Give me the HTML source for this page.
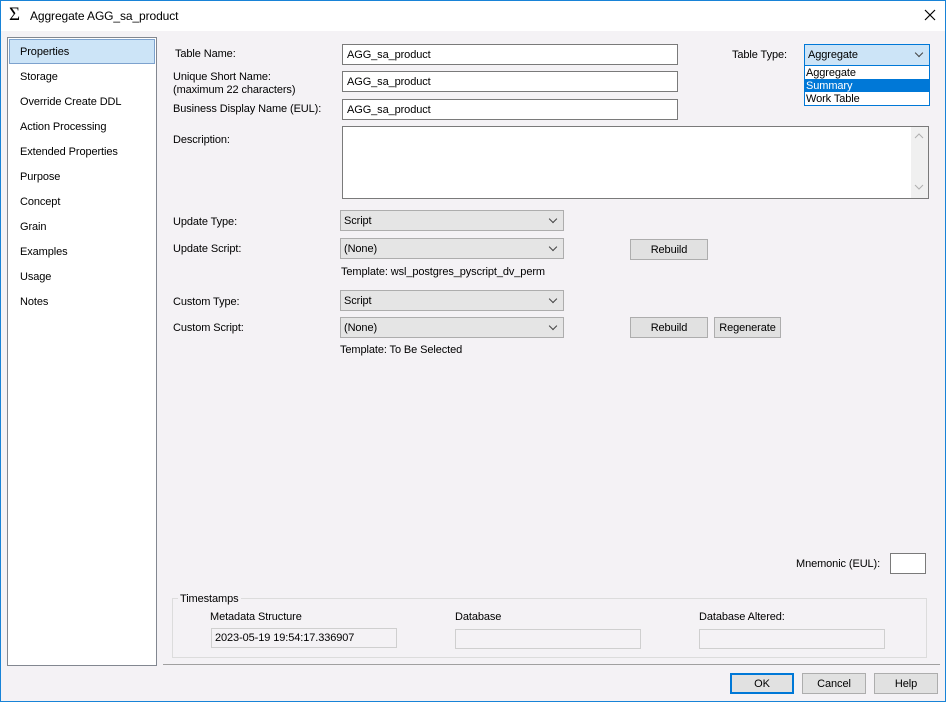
<!DOCTYPE html>
<html><head><meta charset="utf-8"><style>
*{box-sizing:border-box;margin:0;padding:0}
body{width:946px;height:702px;position:relative;background:#f4f2f5;font-family:"Liberation Sans",sans-serif;font-size:11px;letter-spacing:-0.1px;color:#000;overflow:hidden}
.a{position:absolute;white-space:nowrap}
.win{position:absolute;left:0;top:0;width:946px;height:702px;border:1px solid #1883d7}
.title{position:absolute;left:1px;top:1px;width:944px;height:30px;background:#fff}
.inp{position:absolute;background:#fff;border:1px solid #7a7a7a;padding:4px 4px 0;height:21px}
.sel{position:absolute;background:#e5e5e5;border:1px solid #adadad;padding:4px 3px 0;height:21px}
.sel:after{content:"";position:absolute;right:7px;top:5px;width:5px;height:5px;border-right:1px solid #444;border-bottom:1px solid #444;transform:rotate(45deg)}
.btn{position:absolute;background:#e1e1e1;border:1px solid #adadad;text-align:center;line-height:20px;height:21px}
.ro{position:absolute;background:#f4f2f5;border:1px solid #cfcfcf;padding:3px 3px 0;height:20px}
.li{position:absolute;left:20px}
</style></head><body>
<div class="win"></div>
<div class="title"></div>
<div class="a" style="left:9px;top:4px;font-size:19px;font-family:'Liberation Serif',serif">&Sigma;</div>
<div class="a" style="left:30px;top:9px;font-size:12px">Aggregate AGG_sa_product</div>
<svg class="a" style="left:924px;top:9px" width="12" height="12"><path d="M1 1L11 11M11 1L1 11" stroke="#000" stroke-width="1.2"/></svg>

<div style="position:absolute;left:7px;top:37px;width:150px;height:629px;background:#fff;border:1px solid #828790"></div>
<div style="position:absolute;left:9px;top:39px;width:146px;height:25px;background:#cce4f7;border:1px solid #7da2ce"></div>
<div class="a li" style="top:46px">Properties</div>
<div class="a li" style="top:71px">Storage</div>
<div class="a li" style="top:96px">Override Create DDL</div>
<div class="a li" style="top:121px">Action Processing</div>
<div class="a li" style="top:146px">Extended Properties</div>
<div class="a li" style="top:171px">Purpose</div>
<div class="a li" style="top:196px">Concept</div>
<div class="a li" style="top:221px">Grain</div>
<div class="a li" style="top:246px">Examples</div>
<div class="a li" style="top:271px">Usage</div>
<div class="a li" style="top:296px">Notes</div>

<div class="a" style="left:175px;top:48px">Table Name:</div>
<div class="a" style="left:173px;top:71px;line-height:13px">Unique Short Name:<br>(maximum 22 characters)</div>
<div class="a" style="left:173px;top:103px">Business Display Name (EUL):</div>
<div class="a" style="left:173px;top:134px">Description:</div>
<div class="inp" style="left:342px;top:44px;width:336px">AGG_sa_product</div>
<div class="inp" style="left:342px;top:71px;width:336px">AGG_sa_product</div>
<div class="inp" style="left:342px;top:99px;width:336px">AGG_sa_product</div>
<div class="inp" style="left:342px;top:126px;width:587px;height:73px"></div>
<div style="position:absolute;left:911px;top:127px;width:17px;height:71px;background:#f0f0f0"></div>
<svg class="a" style="left:914px;top:133px" width="10" height="60"><path d="M1 5L5 1L9 5M1 52L5 56L9 52" stroke="#b0b0b0" fill="none"/></svg>

<div class="a" style="left:732px;top:49px">Table Type:</div>
<div class="sel" style="left:804px;top:44px;width:126px;background:#cce4f7;border-color:#0078d7;height:22px">Aggregate</div>
<div style="position:absolute;left:804px;top:65px;width:126px;height:41px;background:#fff;border:1px solid #0078d7"></div>
<div class="a" style="left:806px;top:67px">Aggregate</div>
<div style="position:absolute;left:805px;top:79px;width:124px;height:13px;background:#0078d7"></div>
<div class="a" style="left:806px;top:80px;color:#fff">Summary</div>
<div class="a" style="left:806px;top:93px">Work Table</div>

<div class="a" style="left:173px;top:216px">Update Type:</div>
<div class="a" style="left:173px;top:243px">Update Script:</div>
<div class="sel" style="left:340px;top:210px;width:224px">Script</div>
<div class="sel" style="left:340px;top:238px;width:224px">(None)</div>
<div class="btn" style="left:630px;top:239px;width:78px">Rebuild</div>
<div class="a" style="left:341px;top:266px">Template: wsl_postgres_pyscript_dv_perm</div>
<div class="a" style="left:173px;top:296px">Custom Type:</div>
<div class="a" style="left:173px;top:322px">Custom Script:</div>
<div class="sel" style="left:340px;top:290px;width:224px">Script</div>
<div class="sel" style="left:340px;top:317px;width:224px">(None)</div>
<div class="btn" style="left:630px;top:317px;width:78px">Rebuild</div>
<div class="btn" style="left:714px;top:317px;width:67px">Regenerate</div>
<div class="a" style="left:340px;top:344px">Template: To Be Selected</div>

<div class="a" style="left:796px;top:558px">Mnemonic (EUL):</div>
<div class="inp" style="left:890px;top:553px;width:36px"></div>

<div style="position:absolute;left:172px;top:598px;width:755px;height:60px;border:1px solid #dcdcdc"></div>
<div class="a" style="left:178px;top:593px;background:#f4f2f5;padding:0 2px">Timestamps</div>
<div class="a" style="left:210px;top:611px">Metadata Structure</div>
<div class="a" style="left:455px;top:611px">Database</div>
<div class="a" style="left:699px;top:611px">Database Altered:</div>
<div class="ro" style="left:211px;top:628px;width:186px">2023-05-19 19:54:17.336907</div>
<div class="ro" style="left:455px;top:629px;width:186px"></div>
<div class="ro" style="left:699px;top:629px;width:186px"></div>

<div style="position:absolute;left:163px;top:664px;width:777px;height:1px;background:#a0a0a0"></div>
<div class="btn" style="left:730px;top:673px;width:64px;border:2px solid #0078d7;line-height:18px">OK</div>
<div class="btn" style="left:802px;top:673px;width:64px">Cancel</div>
<div class="btn" style="left:874px;top:673px;width:64px">Help</div>
</body></html>
